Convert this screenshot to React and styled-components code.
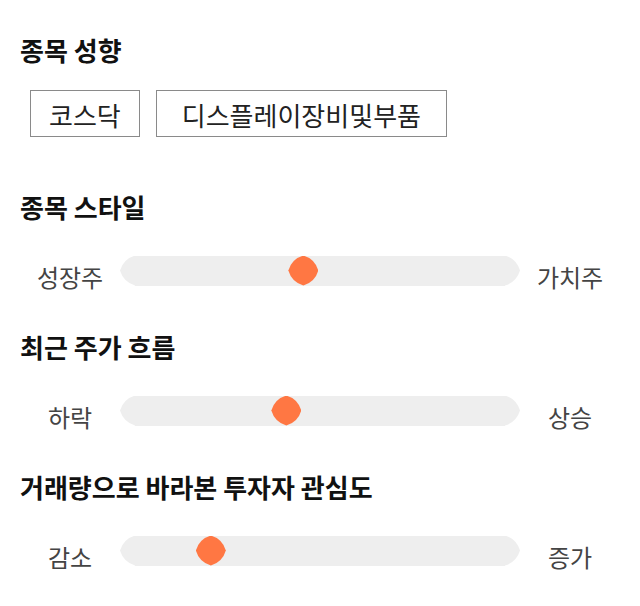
import React from 'react';
import styled, { createGlobalStyle } from 'styled-components';

const track = '#eeeeee';
const accent = '#ff7743';

const GlobalStyle = createGlobalStyle`
	body {
		margin: 0;
		background: #fff;
		font-family: "Noto Sans CJK KR", "Noto Sans", sans-serif;
	}
`;

const Page = styled.div`
	padding: 32px 20px 0;
`;

const Section = styled.section`
	margin-bottom: ${props => props.$after}px;
`;

const Heading = styled.h2`
	margin: 0;
	font-size: 26px;
	line-height: 36px;
	font-weight: 700;
	color: #111;
`;

const ChipRow = styled.div`
	display: flex;
	gap: 16px;
	margin-top: 22px;
	padding-left: 10px;
`;

const Chip = styled.div`
	box-sizing: border-box;
	height: 47px;
	padding: 3px ${props => props.$pad}px 0;
	border: 1px solid #8a8a8a;
	font-size: 26px;
	line-height: 41px;
	color: #222;
`;

const SliderRow = styled.div`
	display: grid;
	grid-template-columns: 100px 1fr 100px;
	align-items: center;
	height: 47px;
	margin-top: 22px;
`;

const SideLabel = styled.span`
	padding-top: 11px;
	text-align: center;
	font-size: 24px;
	color: #444;
`;

const Track = styled.div`
	position: relative;
	height: 30px;
	margin: 0 15px;
	background: ${track};

	&::before,
	&::after {
		content: '';
		position: absolute;
		top: 0;
		width: 15px;
		height: 30px;
		background: ${track};
	}

	&::before {
		left: -15px;
		clip-path: path('M15 0 Q3.5 3.5 0 15 Q3.5 26.5 15 30 Z');
	}

	&::after {
		right: -15px;
		clip-path: path('M0 0 Q11.5 3.5 15 15 Q11.5 26.5 0 30 Z');
	}
`;

const Thumb = styled.div`
	position: absolute;
	top: 50%;
	left: ${props => props.$value}%;
	width: 30px;
	height: 30px;
	background: ${accent};
	transform: translate(-50%, -50%);
	clip-path: path('M15 0 Q26.6 3.4 30 15 Q26.6 26.6 15 30 Q3.4 26.6 0 15 Q3.4 3.4 15 0 Z');
`;

const chips = [
	{ label: '코스닥', pad: 18 },
	{ label: '디스플레이장비및부품', pad: 25 },
];

const sliders = [
	{ title: '종목 스타일', left: '성장주', right: '가치주', value: 45.5 },
	{ title: '최근 주가 흐름', left: '하락', right: '상승', value: 40.9 },
	{ title: '거래량으로 바라본 투자자 관심도', left: '감소', right: '증가', value: 20.5 },
];

export default function App() {
	return (
		<>
			<GlobalStyle />
			<Page>
				<Section $after={52}>
					<Heading>종목 성향</Heading>
					<ChipRow>
						{chips.map(c => (
							<Chip key={c.label} $pad={c.pad}>{c.label}</Chip>
						))}
					</ChipRow>
				</Section>
				{sliders.map(s => (
					<Section key={s.title} $after={35}>
						<Heading>{s.title}</Heading>
						<SliderRow>
							<SideLabel>{s.left}</SideLabel>
							<Track>
								<Thumb $value={s.value} />
							</Track>
							<SideLabel>{s.right}</SideLabel>
						</SliderRow>
					</Section>
				))}
			</Page>
		</>
	);
}
